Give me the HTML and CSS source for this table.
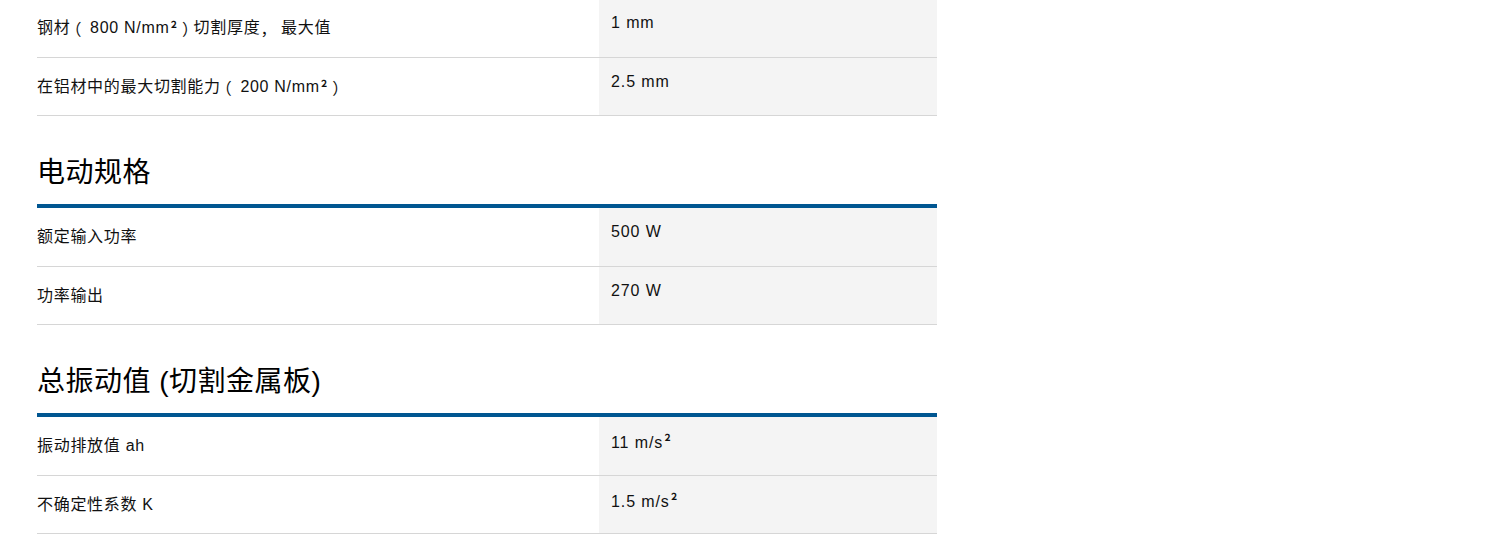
FILE: index.html
```html
<!DOCTYPE html>
<html lang="zh-CN">
<head>
<meta charset="utf-8">
<title>技术参数</title>
<link rel="stylesheet" href="styles.css">
</head>
<body>
<div class="specs">
  <div class="spec-table">
    <div class="row">
      <div class="label">钢材<span class="open">（</span>800 N/mm<span class="sq">²</span><span class="close">）</span>切割厚度<span class="comma">，</span>最大值</div>
      <div class="value">1 mm</div>
    </div>
    <div class="row">
      <div class="label">在铝材中的最大切割能力<span class="open">（</span>200 N/mm<span class="sq">²</span><span class="close">）</span></div>
      <div class="value">2.5 mm</div>
    </div>
  </div>

  <h2 class="section-title">电动规格</h2>
  <div class="spec-table">
    <div class="row">
      <div class="label">额定输入功率</div>
      <div class="value">500 W</div>
    </div>
    <div class="row">
      <div class="label">功率输出</div>
      <div class="value">270 W</div>
    </div>
  </div>

  <h2 class="section-title">总振动值 (切割金属板)</h2>
  <div class="spec-table">
    <div class="row">
      <div class="label">振动排放值 ah</div>
      <div class="value">11 m/s<span class="sq">²</span></div>
    </div>
    <div class="row">
      <div class="label">不确定性系数 K</div>
      <div class="value">1.5 m/s<span class="sq">²</span></div>
    </div>
  </div>
</div>
</body>
</html>
```

FILE: styles.css
```css
html, body {
  margin: 0;
  padding: 0;
  background: #ffffff;
}

body {
  font-family: "Liberation Sans", Arial, "Noto Sans CJK SC", sans-serif;
  color: #111111;
}

.specs {
  width: 900px;
  margin-left: 37px;
  margin-top: -1px;
}

.spec-table {
  display: flex;
  flex-direction: column;
}

.row {
  display: flex;
  height: 58.5px;
}

.label {
  width: 562px;
  box-sizing: border-box;
  display: flex;
  align-items: center;
  border-bottom: 1px solid #d6d6d6;
  font-size: 16px;
  line-height: 22px;
  letter-spacing: 0.7px;
  padding-top: 1px;
  white-space: pre;
}

.value {
  flex: 1;
  box-sizing: border-box;
  background: #f4f4f4;
  border-bottom: 1px solid #d6d6d6;
  padding: 12px 12px 0 12px;
  font-size: 16px;
  line-height: 24px;
  letter-spacing: 0.9px;
}

/* half-width brackets with their own spacing */
.open,
.close,
.comma {
  font-family: "Noto Sans CJK SC", sans-serif;
  font-feature-settings: "halt" 1;
}

.open {
  margin-left: 3px;
  margin-right: 8px;
}

.close {
  margin-left: 4px;
  margin-right: 3px;
}

.comma {
  font-feature-settings: normal;
  margin-right: 4px;
}

.sq {
  font-family: "Noto Sans CJK SC", sans-serif;
  font-size: 16px;
  font-weight: 500;
  margin-left: 1px;
}

.section-title {
  margin: 40px 0 0 0;
  padding: 0 0 14px 0;
  border-bottom: 4px solid #005691;
  font-size: 28px;
  font-weight: normal;
  line-height: 34px;
  letter-spacing: 0.5px;
  color: #000000;
}
```
